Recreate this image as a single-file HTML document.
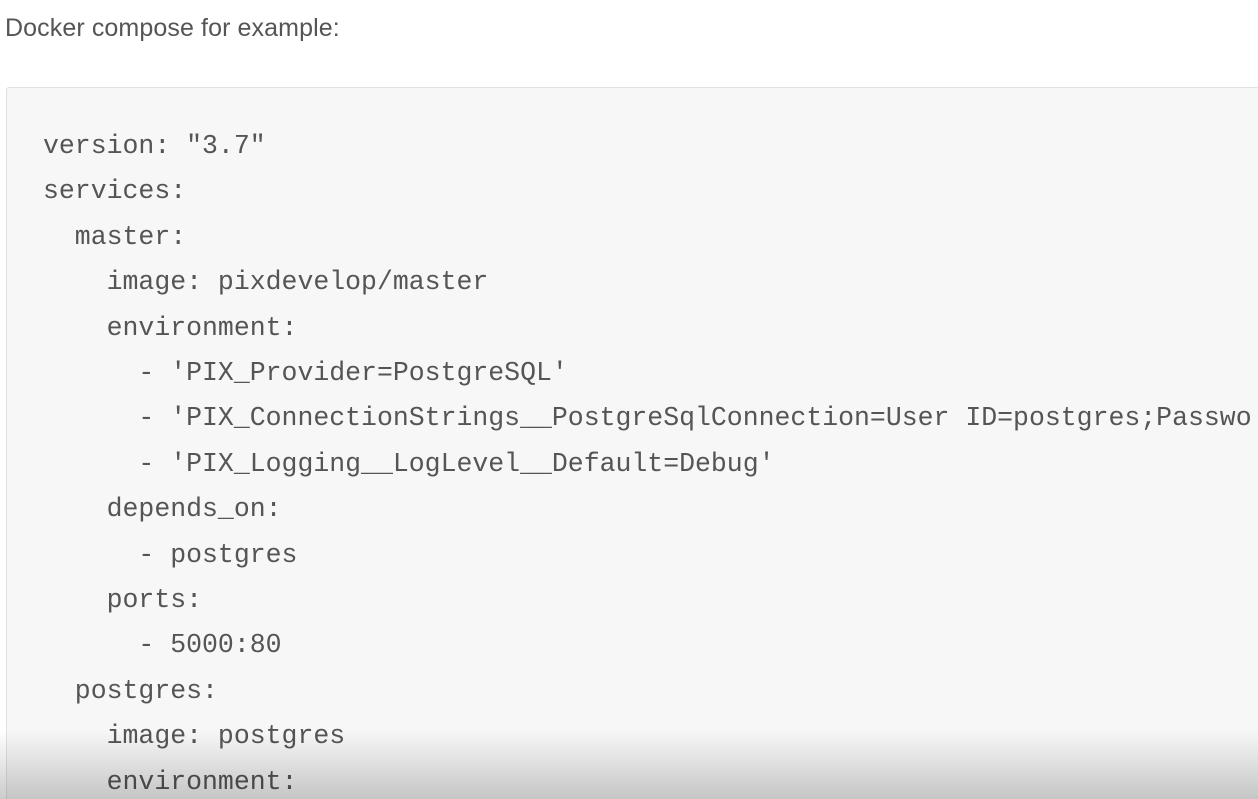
<!DOCTYPE html>
<html><head><meta charset="utf-8">
<style>
html,body{margin:0;padding:0;width:1258px;height:799px;overflow:hidden;background:#fff;position:relative;}
.h{position:absolute;left:5px;top:14px;font-family:"Liberation Sans",sans-serif;font-size:25px;color:#555;letter-spacing:0.1px;}
.box{position:absolute;left:6px;top:87px;width:1260px;height:712px;background:#f7f7f7;border:1px solid #e2e2e2;border-bottom:none;border-radius:3px 3px 0 0;overflow:hidden;}
.l{position:absolute;left:36px;font-family:"Liberation Mono",monospace;font-size:26.5px;line-height:45px;color:#555;white-space:pre;}
.shade{position:absolute;left:0;top:730px;width:1258px;height:69px;background:linear-gradient(to bottom,rgba(0,0,0,0),rgba(0,0,0,0.2));}
</style></head><body>
<div class="h">Docker compose for example:</div>
<div class="box">
<div class="l" style="top:36px">version: "3.7"</div>
<div class="l" style="top:81.4px">services:</div>
<div class="l" style="top:126.8px">  master:</div>
<div class="l" style="top:172.2px">    image: pixdevelop/master</div>
<div class="l" style="top:217.6px">    environment:</div>
<div class="l" style="top:263px">      - 'PIX_Provider=PostgreSQL'</div>
<div class="l" style="top:308.4px">      - 'PIX_ConnectionStrings__PostgreSqlConnection=User ID=postgres;Passwo</div>
<div class="l" style="top:353.8px">      - 'PIX_Logging__LogLevel__Default=Debug'</div>
<div class="l" style="top:399.2px">    depends_on:</div>
<div class="l" style="top:444.6px">      - postgres</div>
<div class="l" style="top:490px">    ports:</div>
<div class="l" style="top:535.4px">      - 5000:80</div>
<div class="l" style="top:580.8px">  postgres:</div>
<div class="l" style="top:626.2px">    image: postgres</div>
<div class="l" style="top:671.6px">    environment:</div>
</div>
<div class="shade"></div>
</body></html>
